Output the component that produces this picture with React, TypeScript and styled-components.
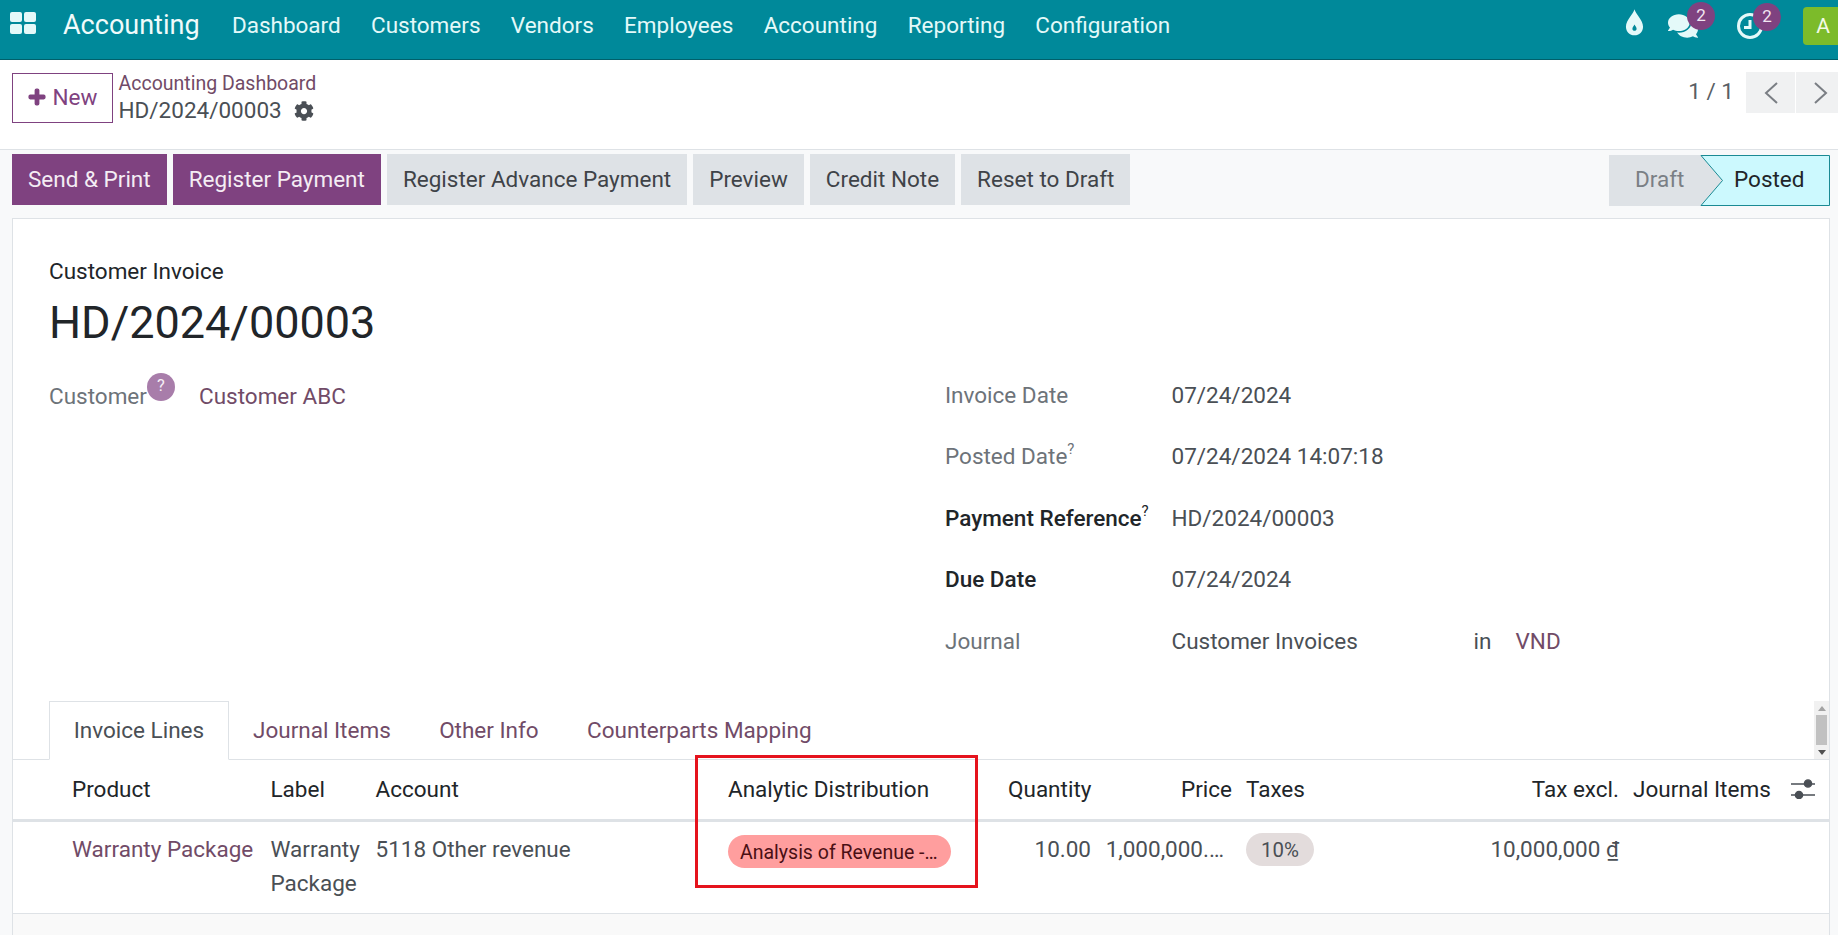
import { ReactNode } from "react";
import styled, { createGlobalStyle } from "styled-components";
import { FaCog, FaComments, FaPlus } from "react-icons/fa";

const NAV_ITEMS = ["Dashboard", "Customers", "Vendors", "Employees", "Accounting", "Reporting", "Configuration"];
const TABS = ["Invoice Lines", "Journal Items", "Other Info", "Counterparts Mapping"];

const App = () => {
  return (
    <>
      <GlobalStyle />
      <Page>
        <NavBar>
          <AppsIcon viewBox="0 0 26 22">
            <rect x="0" y="0" width="12" height="10" rx="2" />
            <rect x="14" y="0" width="12" height="10" rx="2" />
            <rect x="0" y="12" width="12" height="10" rx="2" />
            <rect x="14" y="12" width="12" height="10" rx="2" />
          </AppsIcon>
          <Brand>Accounting</Brand>
          {NAV_ITEMS.map((item) => (
            <NavItem key={item}>{item}</NavItem>
          ))}
          <Systray>
            <DropIcon viewBox="0 0 20 28">
              <path
                fillRule="evenodd"
                d="M10 0 C11 5 19 11 19 18.5 C19 24 15 27.5 10 27.5 C5 27.5 1 24 1 18.5 C1 11 9 5 10 0 Z M10 16 C9 18 7.8 19 7.8 20.6 C7.8 22 8.8 22.8 10 22.8 C11.2 22.8 12.2 22 12.2 20.6 C12.2 19 11 18 10 16 Z"
              />
            </DropIcon>
            <TrayItem $width={30} $gap={24}>
              <FaComments size={30} />
              <Badge $right={-17}>2</Badge>
            </TrayItem>
            <TrayItem $width={28} $gap={38}>
              <ClockIcon viewBox="0 0 28 28">
                <circle cx="14" cy="14" r="11.5" />
                <path d="M14 8 V15.5 H8" />
              </ClockIcon>
              <Badge $right={-17}>2</Badge>
            </TrayItem>
            <Avatar>A</Avatar>
          </Systray>
        </NavBar>

        <ControlPanel>
          <NewButton>
            <FaPlus size={18} />
            New
          </NewButton>
          <Breadcrumbs>
            <BreadcrumbLink>Accounting Dashboard</BreadcrumbLink>
            <BreadcrumbCurrent>
              HD/2024/00003
              <FaCog size={20} color="#4a4f55" />
            </BreadcrumbCurrent>
          </Breadcrumbs>
          <Pager>
            <PagerValue>1 / 1</PagerValue>
            <PagerButton $width={49}>
              <Chevron viewBox="0 0 14 22">
                <path d="M13 1 L2 11 L13 21" />
              </Chevron>
            </PagerButton>
            <PagerButton $width={42} $inset={8}>
              <Chevron viewBox="0 0 14 22">
                <path d="M1 1 L12 11 L1 21" />
              </Chevron>
            </PagerButton>
          </Pager>
        </ControlPanel>

        <ActionBar>
          <ActionButton $primary>Send &amp; Print</ActionButton>
          <ActionButton $primary>Register Payment</ActionButton>
          <ActionButton>Register Advance Payment</ActionButton>
          <ActionButton>Preview</ActionButton>
          <ActionButton>Credit Note</ActionButton>
          <ActionButton>Reset to Draft</ActionButton>
          <StatusBar>
            <StatusDraft>Draft</StatusDraft>
            <StatusPosted>
              <StatusShape viewBox="0 0 130 51" preserveAspectRatio="none">
                <path d="M1 0.5 H129.5 V50.5 H1 L22.5 25.5 Z" />
              </StatusShape>
              <StatusText>Posted</StatusText>
            </StatusPosted>
          </StatusBar>
        </ActionBar>

        <Sheet>
          <DocType>Customer Invoice</DocType>
          <DocTitle>HD/2024/00003</DocTitle>
          <FormGrid>
            <FormColumn>
              <FormRow $labelWidth={150}>
                <CustomerLabel>
                  Customer
                  <HelpBadge>?</HelpBadge>
                </CustomerLabel>
                <CustomerLink>Customer ABC</CustomerLink>
              </FormRow>
            </FormColumn>
            <FormColumn>
              <Field label="Invoice Date">07/24/2024</Field>
              <Field label="Posted Date" help>
                07/24/2024 14:07:18
              </Field>
              <Field label="Payment Reference" help strong>
                HD/2024/00003
              </Field>
              <Field label="Due Date" strong>
                07/24/2024
              </Field>
              <Field label="Journal">
                <JournalValue>Customer Invoices</JournalValue>
                <JournalIn>in</JournalIn>
                <LinkValue>VND</LinkValue>
              </Field>
            </FormColumn>
          </FormGrid>

          <TabBar>
            {TABS.map((tab, index) => (
              <Tab key={tab} $active={index === 0}>
                {tab}
              </Tab>
            ))}
            <ScrollBar>
              <ScrollArrow $up />
              <ScrollThumb />
              <ScrollArrow />
            </ScrollBar>
          </TabBar>

          <LinesTable>
            <HeadRow>
              <Cell>Product</Cell>
              <Cell>Label</Cell>
              <Cell>Account</Cell>
              <Cell>Analytic Distribution</Cell>
              <Cell $right>Quantity</Cell>
              <Cell $right>Price</Cell>
              <Cell $pad={14}>Taxes</Cell>
              <Cell $right>Tax excl.</Cell>
              <Cell $pad={14}>Journal Items</Cell>
              <SlidersCell>
                <SlidersIcon viewBox="0 0 24 20">
                  <path d="M0 5 H24 M0 16 H24" />
                  <circle cx="17" cy="4.5" r="3.6" />
                  <circle cx="8" cy="16" r="3.6" />
                </SlidersIcon>
              </SlidersCell>
            </HeadRow>
            <BodyRow>
              <ProductCell>Warranty Package</ProductCell>
              <Cell>Warranty Package</Cell>
              <Cell>5118 Other revenue</Cell>
              <Cell>
                <AnalyticTag>Analysis of Revenue -…</AnalyticTag>
              </Cell>
              <Cell $right>10.00</Cell>
              <PriceCell>1,000,000.…</PriceCell>
              <Cell $pad={14}>
                <TaxTag>10%</TaxTag>
              </Cell>
              <Cell $right>10,000,000 ₫</Cell>
              <Cell />
              <Cell />
            </BodyRow>
            <Highlight />
          </LinesTable>
          <SheetFooter />
        </Sheet>
      </Page>
    </>
  );
};

export default App;

interface FieldProps {
  label: string;
  help?: boolean;
  strong?: boolean;
  children: ReactNode;
}

const Field = ({ label, help, strong, children }: FieldProps) => (
  <FormRow $labelWidth={226.5}>
    <FieldLabel $strong={strong}>
      {label}
      {help && <HelpMark>?</HelpMark>}
    </FieldLabel>
    <FieldValue>{children}</FieldValue>
  </FormRow>
);

const GlobalStyle = createGlobalStyle`
  html, body {
    margin: 0;
    padding: 0;
    height: 100%;
    overflow: hidden;
    background: #f8f9fa;
  }
  * {
    box-sizing: border-box;
  }
  body {
    font-family: Roboto, "Liberation Sans", sans-serif;
    font-size: 22.5px;
    line-height: 34px;
    color: #4a4f55;
  }
`;

const Page = styled.div`
  display: flex;
  flex-direction: column;
  width: 1838px;
  height: 935px;
  overflow: hidden;
`;

const NavBar = styled.header`
  display: flex;
  align-items: center;
  flex-shrink: 0;
  height: 60px;
  padding-left: 10px;
  background: #00899a;
  border-bottom: 1px solid #00606b;
  color: #e4f9f9;
`;

const AppsIcon = styled.svg`
  width: 26px;
  height: 22px;
  margin-top: -13px;
  fill: #e4f9f9;
`;

const Brand = styled.span`
  margin: 0 17.2px 9px 27px;
  font-size: 27px;
  color: #f0fbfb;
`;

const NavItem = styled.span`
  margin-bottom: 9px;
  padding: 0 15.15px;
`;

const Systray = styled.div`
  display: flex;
  align-items: center;
  margin-left: auto;
  margin-bottom: 8px;
`;

const DropIcon = styled.svg`
  width: 19px;
  height: 27px;
  margin-bottom: 6px;
  fill: #e4f9f9;
`;

const TrayItem = styled.div<{ $width: number; $gap: number }>`
  position: relative;
  display: flex;
  align-items: center;
  justify-content: center;
  width: ${(p) => p.$width}px;
  margin-left: ${(p) => p.$gap}px;
  color: #e4f9f9;
`;

const ClockIcon = styled.svg`
  width: 28px;
  height: 28px;
  fill: none;
  stroke: #e4f9f9;
  stroke-width: 3;
`;

const Badge = styled.span<{ $right: number }>`
  position: absolute;
  top: -9px;
  right: ${(p) => p.$right}px;
  width: 28px;
  height: 28px;
  border-radius: 50%;
  background: #7f4280;
  color: #f1e6f1;
  font-size: 17px;
  line-height: 26px;
  text-align: center;
`;

const Avatar = styled.div`
  width: 35px;
  height: 38px;
  margin-left: 39px;
  padding-left: 5px;
  border-radius: 4px 0 0 4px;
  background: #7cbb2a;
  color: #f3fae6;
  font-size: 21px;
  line-height: 38px;
  text-align: center;
`;

const ControlPanel = styled.div`
  display: flex;
  flex-shrink: 0;
  height: 90px;
  padding: 13px 0 0 12px;
  background: #fff;
  border-bottom: 1px solid #dee2e6;
`;

const NewButton = styled.button`
  display: flex;
  align-items: center;
  justify-content: center;
  gap: 7px;
  width: 101px;
  height: 50px;
  padding: 0 0 2px;
  border: 1px solid #7f4280;
  background: #fff;
  color: #7f4280;
  font: inherit;

  svg {
    stroke: currentColor;
    stroke-width: 40;
  }
`;

const Breadcrumbs = styled.div`
  display: flex;
  flex-direction: column;
  margin: -3px 0 0 5.5px;
`;

const BreadcrumbLink = styled.span`
  height: 27px;
  font-size: 19.5px;
  line-height: 27px;
  color: #714b67;
`;

const BreadcrumbCurrent = styled.span`
  display: flex;
  align-items: center;
  gap: 12px;
  height: 27px;
  line-height: 27px;
  color: #4a4f55;
`;

const Pager = styled.div`
  display: flex;
  align-items: flex-start;
  margin-left: auto;
  gap: 1px;
  height: 41px;
  margin-top: -1px;
`;

const PagerValue = styled.span`
  margin-right: 11px;
  line-height: 38px;
  color: #5a5f66;
`;

const PagerButton = styled.div<{ $width: number; $inset?: number }>`
  display: flex;
  align-items: center;
  justify-content: center;
  width: ${(p) => p.$width}px;
  height: 41px;
  padding-left: ${(p) => p.$inset ?? 0}px;
  background: #f0f1f2;
`;

const Chevron = styled.svg`
  width: 14px;
  height: 22px;
  fill: none;
  stroke: #7a7e84;
  stroke-width: 2;
`;

const ActionBar = styled.div`
  display: flex;
  flex-shrink: 0;
  gap: 6px;
  height: 68px;
  padding: 4px 8px 0 12px;
`;

const ActionButton = styled.button<{ $primary?: boolean }>`
  height: 51px;
  padding: 0 16px 2px;
  border: 0;
  background: ${(p) => (p.$primary ? "#7f4280" : "#dee2e6")};
  color: ${(p) => (p.$primary ? "#f4edf4" : "#3f4348")};
  font: inherit;
`;

const StatusBar = styled.div`
  display: flex;
  margin-top: 1px;
  margin-left: auto;
  height: 51px;
`;

const StatusDraft = styled.div`
  width: 113px;
  padding: 0 48px 0 26px;
  background: #dee2e6;
  color: #7a7f85;
  line-height: 49px;
`;

const StatusPosted = styled.div`
  position: relative;
  width: 130px;
  margin-left: -22px;
`;

const StatusShape = styled.svg`
  position: absolute;
  inset: 0;
  width: 100%;
  height: 100%;
  fill: #ccf9fe;
  stroke: #1a8a94;
  stroke-width: 1;
`;

const StatusText = styled.span`
  position: relative;
  display: block;
  padding-left: 34px;
  color: #212529;
  line-height: 49px;
`;

const Sheet = styled.main`
  display: flex;
  flex-direction: column;
  flex: 1;
  min-height: 0;
  margin: 0 8px 0 12px;
  padding-top: 35px;
  background: #fff;
  border: 1px solid #dee2e6;
  border-bottom: 0;
`;

const DocType = styled.div`
  padding-left: 36px;
  color: #212529;
`;

const DocTitle = styled.h1`
  margin: 8px 0 0;
  padding-left: 36px;
  font-size: 45px;
  font-weight: 400;
  line-height: 54px;
  color: #212529;
`;

const FormGrid = styled.div`
  display: grid;
  grid-template-columns: 896px 1fr;
  margin-top: 14px;
  padding-left: 36px;
`;

const FormColumn = styled.div`
  display: flex;
  flex-direction: column;
`;

const FormRow = styled.div<{ $labelWidth: number }>`
  display: grid;
  grid-template-columns: ${(p) => p.$labelWidth}px 1fr;
  align-items: center;
  height: 61.5px;
`;

const CustomerLabel = styled.span`
  position: relative;
  top: 1px;
  color: #6d7379;
`;

const HelpBadge = styled.span`
  position: absolute;
  top: -6px;
  left: 98px;
  width: 28px;
  height: 28px;
  border-radius: 50%;
  background: #a87daa;
  color: #f6eff6;
  font-size: 16.5px;
  line-height: 25px;
  text-align: center;
`;

const LinkValue = styled.span`
  color: #714b67;
`;

const CustomerLink = styled(LinkValue)`
  position: relative;
  top: 1px;
`;

const FieldLabel = styled.span<{ $strong?: boolean }>`
  color: ${(p) => (p.$strong ? "#212529" : "#6d7379")};
  font-weight: ${(p) => (p.$strong ? 500 : 400)};
`;

const HelpMark = styled.sup`
  font-size: 15px;
  font-weight: 400;
  line-height: 0;
  vertical-align: 10px;
`;

const FieldValue = styled.div`
  display: flex;
  color: #4a4f55;
`;

const JournalValue = styled.span`
  width: 302px;
`;

const JournalIn = styled.span`
  width: 42px;
`;

const TabBar = styled.div`
  display: flex;
  flex-shrink: 0;
  height: 59px;
  margin-top: 29.5px;
  padding-left: 36px;
  border-bottom: 1px solid #dee2e6;
`;

const Tab = styled.div<{ $active?: boolean }>`
  height: 59px;
  padding: 0 ${(p) => (p.$active ? 23.7 : 23.2)}px;
  line-height: 56px;
  color: ${(p) => (p.$active ? "#4a4f55" : "#714b67")};
  background: ${(p) => (p.$active ? "#fff" : "transparent")};
  border: 1px solid ${(p) => (p.$active ? "#dee2e6" : "transparent")};
  border-bottom-color: ${(p) => (p.$active ? "#fff" : "transparent")};
`;

const ScrollBar = styled.div`
  display: flex;
  flex-direction: column;
  align-items: center;
  margin-left: auto;
  width: 15px;
  height: 58px;
  background: #f1f1f1;
`;

const ScrollArrow = styled.span<{ $up?: boolean }>`
  width: 0;
  height: 0;
  margin: 5px 0;
  border-left: 4px solid transparent;
  border-right: 4px solid transparent;
  ${(p) => (p.$up ? "border-bottom: 5px solid #a3a3a3;" : "border-top: 5px solid #505050;")}
`;

const ScrollThumb = styled.span`
  width: 11px;
  height: 30px;
  background: #c1c1c1;
  flex: none;
  margin-top: -1px;
`;

const LinesTable = styled.div`
  position: relative;
  flex-shrink: 0;
  background: #fff;
`;

const columns = "198.5px 105px 352.5px 280px 83px 141px 201px 186px 172px 39px";

const HeadRow = styled.div`
  display: grid;
  grid-template-columns: ${columns};
  height: 62px;
  padding: 12px 0 0 59px;
  border-bottom: 3px solid #dee2e6;
  color: #212529;
`;

const BodyRow = styled.div`
  display: grid;
  grid-template-columns: ${columns};
  height: 92px;
  padding: 10px 0 0 59px;
  border-bottom: 1px solid #dee2e6;
`;

const Cell = styled.div<{ $right?: boolean; $pad?: number }>`
  padding-left: ${(p) => p.$pad ?? 0}px;
  text-align: ${(p) => (p.$right ? "right" : "left")};
`;

const ProductCell = styled.div`
  color: #714b67;
`;

const PriceCell = styled.div`
  padding-right: 8px;
  text-align: right;
`;

const SlidersCell = styled.div`
  display: flex;
  align-items: center;
  height: 34px;
`;

const SlidersIcon = styled.svg`
  width: 24px;
  height: 20px;
  fill: #4a4f55;
  stroke: #4a4f55;
  stroke-width: 1.4;
`;

const AnalyticTag = styled.span`
  display: block;
  width: 223px;
  height: 33px;
  margin-top: 3px;
  padding: 0 12px;
  border-radius: 17px;
  background: #ff9e9e;
  color: #4a0f14;
  font-size: 19.5px;
  line-height: 35px;
  white-space: nowrap;
`;

const TaxTag = styled.span`
  display: block;
  width: 68px;
  height: 33px;
  margin-top: 1px;
  border-radius: 17px;
  background: #e3dcdc;
  color: #4a4f55;
  font-size: 20.4px;
  line-height: 35px;
  text-align: center;
`;

const Highlight = styled.div`
  position: absolute;
  top: -5px;
  left: 682px;
  width: 283px;
  height: 133px;
  border: 3px solid #e5131d;
  pointer-events: none;
`;

const SheetFooter = styled.div`
  flex: 1;
  background: #f9f9f9;
`;
